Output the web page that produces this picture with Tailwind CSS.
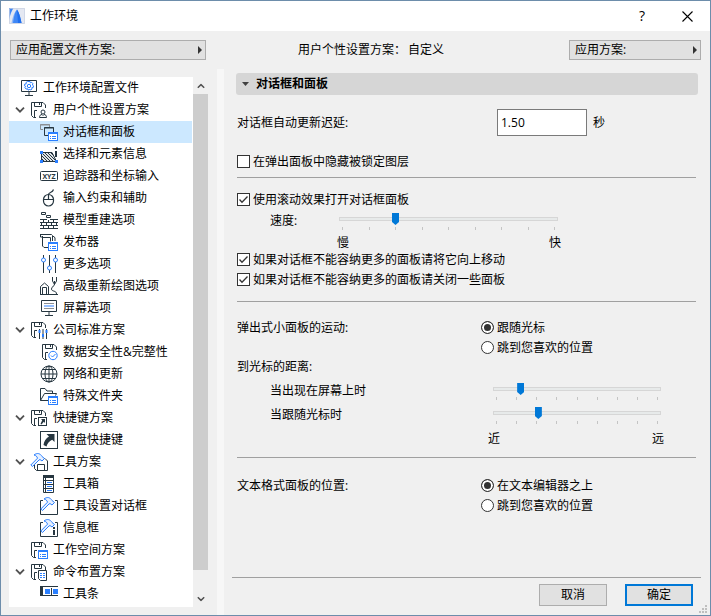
<!DOCTYPE html>
<html lang="zh-CN">
  <head>
    <meta charset="UTF-8" />
    <meta name="viewport" content="width=device-width, initial-scale=1.0" />
    <title>工作环境</title>
    <script src="https://cdn.jsdelivr.net/npm/@tailwindcss/browser@4"></script>
  </head>
  <body class="font-['Open_Sans','Noto_Sans_CJK_SC',sans-serif] text-[12px] leading-4 text-black">
    <!-- Shared icon parts -->
    <svg class="hidden">
      <symbol id="floppy" viewBox="0 0 18 18">
        <path d="M6 16.500H3.500l-2-2v-13H13l2.500 2.500V7M4.500 1.500v4h7v-4M9.500 1.500v2.500M4.500 16V9.500H7" fill="none" stroke="#263640" />
      </symbol>
      <symbol id="badge" viewBox="0 0 18 18">
        <rect x="8.500" y="9.500" width="9" height="8" fill="#fff" stroke="#2a7fff" />
        <path d="M8 10.500h10" stroke="#2a7fff" />
        <path d="M10 13.500h1M12 13.500h4M10 15.500h1M12 15.500h4" stroke="#2a7fff" />
      </symbol>
      <symbol id="hammer" viewBox="0 0 18 18">
        <path d="M4 2C7-.300 10 0 12 3.500l2.500 2-2.500 2.500-2-1.500-1 .500-6.500 6.500L.800 12 7.500 5.200C7 3.500 6 2.500 4 2z" fill="#e6f0ff" stroke="#2a7fff" stroke-linejoin="round" />
      </symbol>
      <symbol id="tick" viewBox="0 0 13 13">
        <path d="M2.500 6.500 5 9.200 10.500 3.500" fill="none" stroke="#333" stroke-width="1.300" />
      </symbol>
      <symbol id="chevron" viewBox="0 0 10 6">
        <path d="M1 .700 5 4.700 9 .700" fill="none" stroke="#505050" stroke-width="1.800" />
      </symbol>
    </svg>

    <div class="relative flex min-h-screen flex-col border border-[#6d8dab] bg-[#f0f0f0]">
      <!-- Title bar -->
      <header class="flex h-[30px] items-center bg-white pr-[13px] pl-2">
        <svg class="mr-[5px] size-4" viewBox="0 0 16 16">
          <rect width="16" height="16" fill="#e4e8f2" />
          <path d="M0 0h4.500C2.500 3 1 7 0 12z" fill="#3f87f5" />
          <path d="M2.500 15C4 8 5.500 4 8 1.500 6.500 5 5.800 10 5.500 15z" fill="#8db8fa" />
          <path d="M4 15C5 8 6 4 8 1.500c2 3 3.500 8 4.500 13.500z" fill="#3f87f5" />
          <path d="M8 1.500c2 3 3.500 8 4.500 13.500H9z" fill="#1f6fee" />
          <path d="M.500 .500h15v15H.500z" fill="none" stroke="#c9d2e2" stroke-opacity=".7" />
        </svg>
        <h1 class="flex-1">工作环境</h1>
        <button type="button" class="mr-[28px] w-4 text-[14px]" aria-label="帮助">?</button>
        <button type="button" class="p-1" aria-label="关闭">
          <svg class="size-[11px]" viewBox="0 0 11 11">
            <path d="M.500 .500l10 10M10.500 .500l-10 10" stroke="#000" stroke-width="1.100" />
          </svg>
        </button>
      </header>

      <!-- Schemes -->
      <div class="flex h-[38px] items-start pt-[9px] pr-[9px] pl-[9px]">
        <button type="button" class="flex h-5 w-[196px] items-center justify-between border border-[#adadad] bg-[#e1e1e1] pr-[3px] pl-[5px]">
          应用配置文件方案:
          <svg class="h-2 w-1" viewBox="0 0 4 8"><path d="M0 0l4 4-4 4z" fill="#333" /></svg>
        </button>
        <p class="ml-[92px] flex flex-1 gap-[2px] pt-[2px]"><span>用户个性设置方案：</span><span>自定义</span></p>
        <button type="button" class="flex h-5 w-[132px] items-center justify-between border border-[#adadad] bg-[#e1e1e1] pr-[3px] pl-[5px]">
          应用方案:
          <svg class="h-2 w-1" viewBox="0 0 4 8"><path d="M0 0l4 4-4 4z" fill="#333" /></svg>
        </button>
      </div>

      <div class="flex flex-1">
        <aside class="my-2 ml-2 flex w-[199px]">
          <nav class="flex-1 bg-white">
            <a href="#" class="flex h-[22px] items-center gap-[5px] pl-[11px]">
              <svg class="size-[18px]" viewBox="0 0 18 18" fill="none" stroke="#263640">
                <path d="M1.500 1.500h15v11h-15zM9 13v3M5 16.500h8" />
                <g stroke="#2a7fff">
                  <circle cx="9" cy="7" r="1.700" />
                  <path d="M8 2.500h2l.400 1.300 1.300-.500 1.300 1.500-.700 1.200 1.200.800-.300 1.700-1.400.200.200 1.400-1.500.900-1-1-.500 1H8l-.500-1.300-1.400.400-1.200-1.500.800-1.200-1.200-.600.300-1.800 1.400-.200-.200-1.300 1.300-.900z" />
                </g>
              </svg>
              工作环境配置文件
            </a>

            <div class="flex h-[22px] items-center gap-[5px] pl-[6px]">
              <button type="button" aria-label="折叠"><svg class="h-[6px] w-[10px]"><use href="#chevron" /></svg></button>
              <a href="#" class="flex items-center gap-[5px]">
                <svg class="size-[18px]" viewBox="0 0 18 18" fill="#fff" stroke="#263640">
                  <use href="#floppy" />
                  <circle cx="13" cy="11" r="2" />
                  <path d="M9.500 16.500c0-2 1-3 2.500-3l1 1 1-1c1.500 0 2.500 1 2.500 3z" />
                </svg>
                用户个性设置方案
              </a>
            </div>
            <a href="#" aria-current="page" class="mr-px flex h-[22px] items-center gap-[5px] bg-[#cce8ff] pl-[31px]">
              <svg class="size-[18px]" viewBox="0 0 18 18" fill="none">
                <path d="M3 6.500H.500v-5h9V4M0 2h10" stroke="#8b8f94" />
                <path d="M8 12.500H4.500v-8h9V9M4 5h10" stroke="#263640" />
                <use href="#badge" />
              </svg>
              对话框和面板
            </a>
            <a href="#" class="flex h-[22px] items-center gap-[5px] pl-[31px]">
              <svg class="size-[18px]" viewBox="0 0 18 18" fill="none" stroke="#263640">
                <path d="M1.500 7.500H12l4.500 9h-15z" fill="#dfe3e5" />
                <path d="M2 8l8.500 8.500M5 8l8.500 8.500M8 8l8 8M2 11l5.500 5.500M2 14l2.500 2.500M11 8l3 3" />
                <path d="M0 6h3v3H0zM0 15h3v3H0zM15 15h3v3h-3z" fill="#2a7fff" stroke="none" />
                <path d="M15 2h2v2h-2zM15 6h2v6h-2z" fill="#263640" stroke="none" />
              </svg>
              选择和元素信息
            </a>
            <a href="#" class="flex h-[22px] items-center gap-[5px] pl-[31px]">
              <svg class="size-[18px]" viewBox="0 0 18 18">
                <rect x=".500" y="4.500" width="17" height="9" rx="1" fill="#fff" stroke="#263640" />
                <text x="9" y="11.500" font-size="7" font-weight="700" text-anchor="middle" fill="#263640">XYZ</text>
              </svg>
              追踪器和坐标输入
            </a>
            <a href="#" class="flex h-[22px] items-center gap-[5px] pl-[31px]">
              <svg class="size-[18px]" viewBox="0 0 18 18" fill="none" stroke="#263640" stroke-width="1.200">
                <rect x="3.500" y="5.500" width="10" height="11.500" rx="5" />
                <path d="M3.500 10.500h10M8.500 5.500v5M8.500 5.500C8.500 3 12.500 4 13.500 .500" />
              </svg>
              输入约束和辅助
            </a>
            <a href="#" class="flex h-[22px] items-center gap-[5px] pl-[31px]">
              <svg class="size-[18px]" viewBox="0 0 18 18" fill="none" stroke="#263640">
                <path d="M1.500 1.500h4v2h-4zM6.500 4.500h4v2h-4z" />
                <path d="M0 8.500h7M10 8.500h8M0 11.500h18M0 14.500h18M0 17.500h18M3.500 8.500v3M13.500 8.500v3M8.500 9v2.500M1.500 11.500v3M6.500 11.500v3M11.500 11.500v3M16.500 11.500v3M3.500 14.500v3M8.500 14.500v3M13.500 14.500v3" />
              </svg>
              模型重建选项
            </a>
            <a href="#" class="flex h-[22px] items-center gap-[5px] pl-[31px]">
              <svg class="size-[18px]" viewBox="0 0 18 18" fill="none" stroke="#263640">
                <path d="M0 1.500h11.500l1 1V8M2.500 3v10l1.500 1.500h4M2.500 4.500h8v4M.500 1.500V4h2M12.500 3.500h1.500l1 1.500v3" />
                <use href="#badge" />
              </svg>
              发布器
            </a>
            <a href="#" class="flex h-[22px] items-center gap-[5px] pl-[31px]">
              <svg class="size-[18px]" viewBox="0 0 18 18" fill="#fff">
                <path d="M3.500 0v18M9.500 0v18M15.500 0v18" stroke="#263640" />
                <g stroke="#2a7fff">
                  <circle cx="3.500" cy="5" r="2" />
                  <circle cx="9.500" cy="13" r="2" />
                  <circle cx="15.500" cy="5" r="2" />
                </g>
              </svg>
              更多选项
            </a>
            <a href="#" class="flex h-[22px] items-center gap-[5px] pl-[31px]">
              <svg class="size-[18px]" viewBox="0 0 18 18" fill="none" stroke="#263640">
                <path d="M.500 17.500v-8l4-3.500 4 3.500v8zM2.500 17v-6.500h4V17M0 17.500h18" />
                <path d="M12.500 0v4l2 3.500 2-3.500V0M14.500 7c0 3-3 2-3 5s5 1 5 5M14.500 4v3" />
              </svg>
              高级重新绘图选项
            </a>
            <a href="#" class="flex h-[22px] items-center gap-[5px] pl-[31px]">
              <svg class="size-[18px]" viewBox="0 0 18 18" fill="none" stroke="#263640">
                <path d="M1.500 1.500h15v11h-15zM9 13v3.500M5 16.500h8" />
                <path d="M4 4.500h10M4 9.500h10" stroke="#8b8f94" />
                <path d="M4 7h10" stroke="#2a7fff" />
              </svg>
              屏幕选项
            </a>

            <div class="flex h-[22px] items-center gap-[5px] pl-[6px]">
              <button type="button" aria-label="折叠"><svg class="h-[6px] w-[10px]"><use href="#chevron" /></svg></button>
              <a href="#" class="flex items-center gap-[5px]">
                <svg class="size-[18px]" viewBox="0 0 18 18">
                  <use href="#floppy" />
                  <path d="M9.500 8v10M13 8v10M16.500 8v10" stroke="#263640" />
                  <path d="M8.500 9h2v3h-2zM12 13h2v3h-2zM15.500 9h2v3h-2z" fill="#2a7fff" />
                </svg>
                公司标准方案
              </a>
            </div>
            <a href="#" class="flex h-[22px] items-center gap-[5px] pl-[31px]">
              <svg class="size-[18px]" viewBox="0 0 18 18" fill="#fff">
                <use href="#floppy" x="1" />
                <g stroke="#2a7fff">
                  <circle cx="13" cy="12.500" r="4.200" />
                  <path d="M11 12.500l1.500 1.500 3-3" fill="none" />
                </g>
              </svg>
              数据安全性&amp;完整性
            </a>
            <a href="#" class="flex h-[22px] items-center gap-[5px] pl-[31px]">
              <svg class="size-[18px]" viewBox="0 0 18 18" fill="none" stroke="#263640">
                <circle cx="9" cy="9" r="8" />
                <ellipse cx="9" cy="9" rx="4" ry="8" />
                <path d="M9 1v16M1 9h16M2.500 4.500h13M2.500 13.500h13" />
              </svg>
              网络和更新
            </a>
            <a href="#" class="flex h-[22px] items-center gap-[5px] pl-[31px]">
              <svg class="size-[18px]" viewBox="0 0 18 18" fill="none" stroke="#263640">
                <path d="M8 13.500H.500v-12H5l2 2.500h5.500v2.500M.500 13.500l4-7h12l-1 2" />
                <use href="#badge" />
              </svg>
              特殊文件夹
            </a>

            <div class="flex h-[22px] items-center gap-[5px] pl-[6px]">
              <button type="button" aria-label="折叠"><svg class="h-[6px] w-[10px]"><use href="#chevron" /></svg></button>
              <a href="#" class="flex items-center gap-[5px]">
                <svg class="size-[18px]" viewBox="0 0 18 18">
                  <use href="#floppy" />
                  <rect x="8.500" y="8.500" width="8" height="8" fill="#fff" stroke="#263640" />
                  <path d="M11 10h4v4l-1.200-1.200L11.500 15.500l-1-.500 1.700-3.700z" fill="#263640" />
                </svg>
                快捷键方案
              </a>
            </div>
            <a href="#" class="flex h-[22px] items-center gap-[5px] pl-[31px]">
              <svg class="size-[18px]" viewBox="0 0 18 18">
                <rect x=".500" y=".500" width="17" height="17" fill="#fff" stroke="#263640" />
                <path d="M6.500 3H14.500v8l-2.300-2.300C9 10.500 7.500 12 6.500 15.500L3.500 14C4 10 6 7.500 9 5.500z" fill="#263640" />
              </svg>
              键盘快捷键
            </a>

            <div class="flex h-[22px] items-center gap-[5px] pl-[6px]">
              <button type="button" aria-label="折叠"><svg class="h-[6px] w-[10px]"><use href="#chevron" /></svg></button>
              <a href="#" class="flex items-center gap-[5px]">
                <svg class="size-[18px]" viewBox="0 0 18 18">
                  <path d="M14 5.500h1l2.500 2.500v9.500h-11l-2-2V12M7.500 17v-5.500h7V17" fill="none" stroke="#263640" />
                  <use href="#hammer" />
                </svg>
                工具方案
              </a>
            </div>
            <a href="#" class="flex h-[22px] items-center gap-[5px] pl-[31px]">
              <svg class="size-[18px]" viewBox="0 0 18 18" fill="none" stroke="#263640">
                <path d="M3.500 .500h10v17h-10z" />
                <path d="M3 1.500h11" stroke-width="3" />
                <path d="M3 5.500h3M11 5.500h3M3 9.500h3M11 9.500h3M3 13.500h3M11 13.500h3M5.500 3v14M6 5.500h5M6 9.500h5M6 13.500h5" />
                <path d="M7 7.500h5M7 11.500h5M7 15.500h5" stroke="#2a7fff" />
              </svg>
              工具箱
            </a>
            <a href="#" class="flex h-[22px] items-center gap-[5px] pl-[31px]">
              <svg class="size-[18px]" viewBox="0 0 18 18">
                <path d="M3 3.500H.500v14h17v-14H15" fill="none" stroke="#263640" />
                <use href="#hammer" />
              </svg>
              工具设置对话框
            </a>
            <a href="#" class="flex h-[22px] items-center gap-[5px] pl-[31px]">
              <svg class="size-[18px]" viewBox="0 0 18 18">
                <path d="M3 3.500H.500v14h17v-14H15" fill="none" stroke="#263640" />
                <use href="#hammer" />
                <path d="M13 8h2v2h-2zM13 11h2v5h-2z" fill="#263640" />
              </svg>
              信息框
            </a>

            <a href="#" class="flex h-[22px] items-center gap-[5px] pl-[21px]">
              <svg class="size-[18px]" viewBox="0 0 18 18">
                <use href="#floppy" />
                <use href="#badge" />
              </svg>
              工作空间方案
            </a>

            <div class="flex h-[22px] items-center gap-[5px] pl-[6px]">
              <button type="button" aria-label="折叠"><svg class="h-[6px] w-[10px]"><use href="#chevron" /></svg></button>
              <a href="#" class="flex items-center gap-[5px]">
                <svg class="size-[18px]" viewBox="0 0 18 18">
                  <use href="#floppy" />
                  <path d="M8.500 7.500h8v10h-6l-2-2z" fill="#fff" stroke="#263640" />
                  <path d="M10 10.500h2M13 10.500h2M10 12.500h2M13 12.500h2M10 14.500h2M13 14.500h2" stroke="#2a7fff" />
                </svg>
                命令布置方案
              </a>
            </div>
            <a href="#" class="flex h-[22px] items-center gap-[5px] pl-[31px]">
              <svg class="size-[18px]" viewBox="0 0 18 18" fill="none">
                <path d="M18 1.500H.500v9H18" stroke="#263640" />
                <path d="M0 1h3v10H0z" fill="#263640" />
                <path d="M5 4h5v5H5zM13 4h5v5h-5z" fill="#2a7fff" />
                <path d="M11.500 3v7" stroke="#263640" />
              </svg>
              工具条
            </a>
          </nav>
          <!-- Scrollbar -->
          <div class="flex w-[15px] flex-col items-center">
            <button type="button" class="flex h-[17px] items-center" aria-label="向上滚动">
              <svg class="h-[6px] w-[8px] rotate-180" viewBox="0 0 10 6"><use href="#chevron" /></svg>
            </button>
            <div class="w-full flex-1 bg-[#cdcdcd]"></div>
            <button type="button" class="mt-5 flex h-[17px] items-center" aria-label="向下滚动">
              <svg class="h-[6px] w-[8px]" viewBox="0 0 10 6"><use href="#chevron" /></svg>
            </button>
          </div>
        </aside>

        <div class="ml-[9px] w-[7px] bg-[#f7f7f7]"></div>

        <main class="flex flex-1 flex-col pt-1 pr-[9px] pl-2">
          <section class="pr-[3px] pl-1">
            <h2 class="flex h-[22px] items-center gap-[7px] rounded-[3px] bg-[#d6d6d6] pl-[6px] font-bold">
              <svg class="h-1 w-[7px]" viewBox="0 0 7 4"><path d="M0 0h7L3.500 4z" fill="#404040" /></svg>
              对话框和面板
            </h2>
            <div class="pr-[2px] pl-px">
              <div class="mt-[14px] flex h-[27px] items-center">
                <label for="delay" class="w-[260px]">对话框自动更新迟延:</label>
                <input id="delay" type="text" value="1.50" class="h-[27px] w-[90px] border border-[#7a7a7a] bg-white px-[3px] outline-none" />
                <span class="ml-[6px]">秒</span>
              </div>
              <label class="mt-4 flex h-5 items-center gap-[3px] pb-px">
                <span class="grid size-[13px]">
                  <input type="checkbox" class="peer col-start-1 row-start-1 size-[13px] appearance-none border border-[#333] bg-white" />
                  <svg class="invisible col-start-1 row-start-1 size-[13px] peer-checked:visible"><use href="#tick" /></svg>
                </span>
                在弹出面板中隐藏被锁定图层
              </label>

              <hr class="mt-[5px] border-[#a0a0a0]" />

              <label class="mt-3 flex h-5 items-center gap-[3px] pb-px">
                <span class="grid size-[13px]">
                  <input type="checkbox" checked class="peer col-start-1 row-start-1 size-[13px] appearance-none border border-[#333] bg-white" />
                  <svg class="invisible col-start-1 row-start-1 size-[13px] peer-checked:visible"><use href="#tick" /></svg>
                </span>
                使用滚动效果打开对话框面板
              </label>
              <div class="flex">
                <label for="speed" class="w-[100px] pt-[3px] pl-[33px]">速度:</label>
                <div class="w-[224px] pt-[3px]">
                  <div class="pr-[3px] pl-[2px]">
                    <input id="speed" type="range" min="0" max="8" value="2" class="block h-3 w-full appearance-none bg-transparent [&::-webkit-slider-runnable-track]:h-[4px] [&::-webkit-slider-runnable-track]:bg-[#e7eaea] [&::-webkit-slider-runnable-track]:outline [&::-webkit-slider-runnable-track]:-outline-offset-1 [&::-webkit-slider-runnable-track]:outline-[#d6d6d6] [&::-webkit-slider-thumb]:-mt-[4px] [&::-webkit-slider-thumb]:h-3 [&::-webkit-slider-thumb]:w-[7px] [&::-webkit-slider-thumb]:appearance-none [&::-webkit-slider-thumb]:bg-[#0078d7] [&::-webkit-slider-thumb]:[clip-path:polygon(0_0,100%_0,100%_75%,50%_100%,0_75%)]" />
                    <div class="mt-[2px] flex h-[3px] justify-between px-[3px]">
                      <i class="w-px bg-[#c4c4c4]"></i><i class="w-px bg-[#c4c4c4]"></i><i class="w-px bg-[#c4c4c4]"></i><i class="w-px bg-[#c4c4c4]"></i><i class="w-px bg-[#c4c4c4]"></i><i class="w-px bg-[#c4c4c4]"></i><i class="w-px bg-[#c4c4c4]"></i><i class="w-px bg-[#c4c4c4]"></i><i class="w-px bg-[#c4c4c4]"></i>
                    </div>
                  </div>
                  <div class="mt-[5px] flex h-[15px] justify-between"><span>慢</span><span>快</span></div>
                </div>
              </div>
              <label class="flex h-5 items-center gap-[3px] pb-px">
                <span class="grid size-[13px]">
                  <input type="checkbox" checked class="peer col-start-1 row-start-1 size-[13px] appearance-none border border-[#333] bg-white" />
                  <svg class="invisible col-start-1 row-start-1 size-[13px] peer-checked:visible"><use href="#tick" /></svg>
                </span>
                如果对话框不能容纳更多的面板请将它向上移动
              </label>
              <label class="flex h-5 items-center gap-[3px] pb-px">
                <span class="grid size-[13px]">
                  <input type="checkbox" checked class="peer col-start-1 row-start-1 size-[13px] appearance-none border border-[#333] bg-white" />
                  <svg class="invisible col-start-1 row-start-1 size-[13px] peer-checked:visible"><use href="#tick" /></svg>
                </span>
                如果对话框不能容纳更多的面板请关闭一些面板
              </label>

              <hr class="mt-[11px] border-[#a0a0a0]" />

              <fieldset class="mt-4 flex" aria-labelledby="motion">
                <span id="motion" class="w-[244px] pt-[2px]">弹出式小面板的运动:</span>
                <div>
                  <label class="flex h-5 items-center gap-[3px] pb-px">
                    <input type="radio" name="motion" checked class="size-[13px] appearance-none rounded-full border border-[#333] bg-white checked:bg-[#333] checked:[box-shadow:inset_0_0_0_2px_#fff]" />
                    跟随光标
                  </label>
                  <label class="flex h-5 items-center gap-[3px] pb-px">
                    <input type="radio" name="motion" class="size-[13px] appearance-none rounded-full border border-[#333] bg-white checked:bg-[#333] checked:[box-shadow:inset_0_0_0_2px_#fff]" />
                    跳到您喜欢的位置
                  </label>
                </div>
              </fieldset>
              <p class="h-5 pt-px">到光标的距离:</p>
              <div class="flex h-6">
                <label for="appear" class="w-[256px] pt-[5px] pl-[33px]">当出现在屏幕上时</label>
                <div class="w-[168px] pt-[5px]">
                  <input id="appear" type="range" min="0" max="100" value="15" class="block h-3 w-full appearance-none bg-transparent [&::-webkit-slider-runnable-track]:h-[4px] [&::-webkit-slider-runnable-track]:bg-[#e7eaea] [&::-webkit-slider-runnable-track]:outline [&::-webkit-slider-runnable-track]:-outline-offset-1 [&::-webkit-slider-runnable-track]:outline-[#d6d6d6] [&::-webkit-slider-thumb]:-mt-[4px] [&::-webkit-slider-thumb]:h-3 [&::-webkit-slider-thumb]:w-[7px] [&::-webkit-slider-thumb]:appearance-none [&::-webkit-slider-thumb]:bg-[#0078d7] [&::-webkit-slider-thumb]:[clip-path:polygon(0_0,100%_0,100%_75%,50%_100%,0_75%)]" />
                  <div class="mt-[2px] flex h-[3px] justify-between px-[3px]">
                    <i class="w-px bg-[#c4c4c4]"></i><i class="w-px bg-[#c4c4c4]"></i><i class="w-px bg-[#c4c4c4]"></i><i class="w-px bg-[#c4c4c4]"></i><i class="w-px bg-[#c4c4c4]"></i><i class="w-px bg-[#c4c4c4]"></i><i class="w-px bg-[#c4c4c4]"></i><i class="w-px bg-[#c4c4c4]"></i><i class="w-px bg-[#c4c4c4]"></i>
                  </div>
                </div>
              </div>
              <div class="flex h-6">
                <label for="follow" class="w-[256px] pt-[5px] pl-[33px]">当跟随光标时</label>
                <div class="w-[168px] pt-[5px]">
                  <input id="follow" type="range" min="0" max="100" value="26" class="block h-3 w-full appearance-none bg-transparent [&::-webkit-slider-runnable-track]:h-[4px] [&::-webkit-slider-runnable-track]:bg-[#e7eaea] [&::-webkit-slider-runnable-track]:outline [&::-webkit-slider-runnable-track]:-outline-offset-1 [&::-webkit-slider-runnable-track]:outline-[#d6d6d6] [&::-webkit-slider-thumb]:-mt-[4px] [&::-webkit-slider-thumb]:h-3 [&::-webkit-slider-thumb]:w-[7px] [&::-webkit-slider-thumb]:appearance-none [&::-webkit-slider-thumb]:bg-[#0078d7] [&::-webkit-slider-thumb]:[clip-path:polygon(0_0,100%_0,100%_75%,50%_100%,0_75%)]" />
                  <div class="mt-[2px] flex h-[3px] justify-between px-[3px]">
                    <i class="w-px bg-[#c4c4c4]"></i><i class="w-px bg-[#c4c4c4]"></i><i class="w-px bg-[#c4c4c4]"></i><i class="w-px bg-[#c4c4c4]"></i><i class="w-px bg-[#c4c4c4]"></i><i class="w-px bg-[#c4c4c4]"></i><i class="w-px bg-[#c4c4c4]"></i><i class="w-px bg-[#c4c4c4]"></i><i class="w-px bg-[#c4c4c4]"></i>
                  </div>
                </div>
              </div>
              <div class="mt-[5px] ml-[251px] flex h-[15px] w-[176px] justify-between"><span>近</span><span>远</span></div>

              <hr class="mt-[11px] border-[#a0a0a0]" />

              <fieldset class="mt-[18px] flex" aria-labelledby="position">
                <span id="position" class="w-[244px] pt-[2px]">文本格式面板的位置:</span>
                <div>
                  <label class="flex h-5 items-center gap-[3px] pb-px">
                    <input type="radio" name="position" checked class="size-[13px] appearance-none rounded-full border border-[#333] bg-white checked:bg-[#333] checked:[box-shadow:inset_0_0_0_2px_#fff]" />
                    在文本编辑器之上
                  </label>
                  <label class="flex h-5 items-center gap-[3px] pb-px">
                    <input type="radio" name="position" class="size-[13px] appearance-none rounded-full border border-[#333] bg-white checked:bg-[#333] checked:[box-shadow:inset_0_0_0_2px_#fff]" />
                    跳到您喜欢的位置
                  </label>
                </div>
              </fieldset>
            </div>
          </section>

          <footer class="mt-auto flex justify-end gap-[18px] border-t border-[#a0a0a0] pt-[6px] pr-2 pb-[9px]">
            <button type="button" class="h-[22px] w-[68px] border border-[#adadad] bg-[#e1e1e1]">取消</button>
            <button type="submit" class="h-[22px] w-[68px] border-2 border-[#0078d7] bg-[#e1e1e1] leading-none">确定</button>
          </footer>
        </main>
      </div>

      <!-- Resize grip -->
      <svg class="absolute right-[3px] bottom-[2px] size-2" viewBox="0 0 8 8">
        <path d="M6 0h2v2H6zM3 3h2v2H3zM6 3h2v2H6zM0 6h2v2H0zM3 6h2v2H3zM6 6h2v2H6z" fill="#bfbfbf" />
      </svg>
    </div>
  </body>
</html>
